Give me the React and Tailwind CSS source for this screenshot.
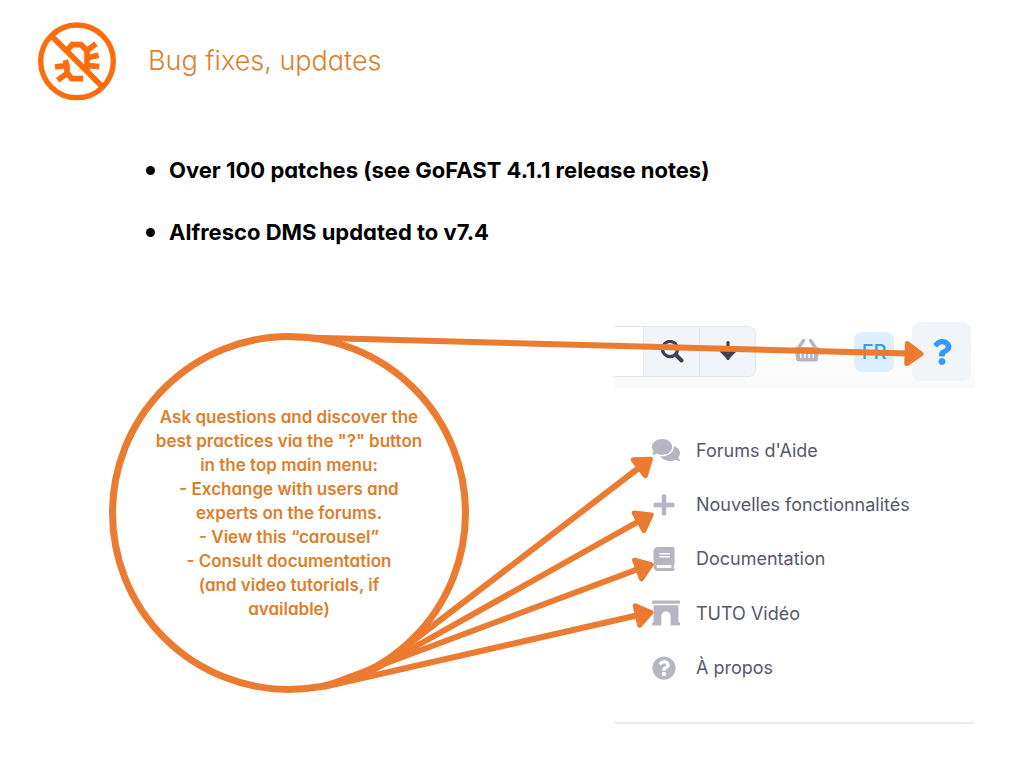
import {
  FaArchway,
  FaBook,
  FaComments,
  FaPlus,
  FaQuestion,
  FaQuestionCircle,
} from 'react-icons/fa';

const menu = [
  { label: "Forums d'Aide", Icon: FaComments, size: 'size-7' },
  { label: 'Nouvelles fonctionnalités', Icon: FaPlus, size: 'size-6' },
  { label: 'Documentation', Icon: FaBook, size: 'size-6' },
  { label: 'TUTO Vidéo', Icon: FaArchway, size: 'size-7' },
  { label: 'À propos', Icon: FaQuestionCircle, size: 'size-6' },
];

function NoBugIcon() {
  return (
    <svg viewBox="51 33 240 240" className="size-20 shrink-0" fill="none" stroke="#ff6c0c" strokeWidth="17" aria-hidden="true">
      <circle cx="171" cy="154" r="109" strokeWidth="16" />
      <path d="M94 77 248 231" />
      <path d="M140 124 156 104H183L201 122V180" />
      <path d="M198 124 228 101M201 143 236 136M201 166 238 170" />
      <path d="M136 150 141 167V187L155 206H190M105 171 142 166M113 211 143 189" />
    </svg>
  );
}

function SearchIcon() {
  return (
    <svg viewBox="0 0 24 24" className="size-6" fill="none" stroke="#3f4254" strokeWidth="3.2" aria-hidden="true">
      <circle cx="10" cy="9" r="7.600" />
      <path d="m16 15 5.500 5.500" strokeWidth="4" strokeLinecap="round" />
    </svg>
  );
}

function DownIcon() {
  return (
    <svg viewBox="0 0 24 24" className="size-6" fill="none" stroke="#3f4254" strokeWidth="3.2" strokeLinecap="round" aria-hidden="true">
      <path d="M12 2.500v16" />
      <path d="M5 11.500l7 7 7-7Z" fill="#3f4254" strokeWidth="2" strokeLinejoin="round" />
    </svg>
  );
}

function BasketIcon() {
  return (
    <svg viewBox="0 0 26 24" className="h-6 w-[26px]" aria-hidden="true">
      <path fill="none" stroke="#b5b5c3" strokeWidth="3.400" strokeLinecap="round" d="m4.500 10 5-7.500M21.500 10l-5-7.500" />
      <path
        fill="#b5b5c3"
        fillRule="evenodd"
        d="M2 9h22a1.5 1.5 0 0 1 1.300 2l-1.300 10a3 3 0 0 1-3 2.500h-16a3 3 0 0 1-3-2.500L.7 11A1.500 1.500 0 0 1 2 9ZM6 14v6h1.600v-6ZM10.200 14v6h1.600v-6ZM14.200 14v6h1.600v-6ZM18.400 14v6H20v-6Z"
      />
    </svg>
  );
}

function Arrows() {
  return (
    <svg
      viewBox="109 322 866 402"
      className="pointer-events-none absolute top-0 left-0 h-[402px] w-[866px]"
      fill="none"
      stroke="#eb7b30"
      strokeWidth="6"
      aria-hidden="true"
    >
      <defs>
        <marker id="head" viewBox="0 0 20 26" markerWidth="20" markerHeight="26" refX="19" refY="13" orient="auto" markerUnits="userSpaceOnUse">
          <path d="M3 3V23L17 13Z" fill="#eb7b30" stroke="#eb7b30" strokeWidth="5" strokeLinejoin="round" />
        </marker>
      </defs>
      <path d="M288 337 909 353.600" />
      <path d="M396 654 640 467" />
      <path d="M370 672 641 520" />
      <path d="M325 686 641 568" />
      <path d="M323 687 641 614.500" />
      <g stroke="none">
        <path markerEnd="url(#head)" d="M288 337 923 354" />
        <path markerEnd="url(#head)" d="M396 654 652 458" />
        <path markerEnd="url(#head)" d="M370 672 653 514" />
        <path markerEnd="url(#head)" d="M325 686 653 564" />
        <path markerEnd="url(#head)" d="M323 687 653 612" />
      </g>
    </svg>
  );
}

function TopBar() {
  return (
    <div className="flex h-[66px] items-start bg-linear-to-b from-white from-30% to-[#f9f9fa]">
      <div className="mt-1 flex h-[51px] w-[142px] overflow-hidden rounded-r-lg border border-l-0 border-[#e1e5f0]">
        <input aria-label="Rechercher" className="w-[29px] min-w-0 bg-white outline-none" />
        <button aria-label="Lancer la recherche" className="flex flex-1 items-center justify-center border-l border-[#e1e5f0] bg-[#f1f4f8]">
          <SearchIcon />
        </button>
        <button aria-label="Options de recherche" className="flex flex-1 items-center justify-center border-l border-[#e1e5f0] bg-[#f1f4f8]">
          <DownIcon />
        </button>
      </div>
      <button aria-label="Panier" className="mt-4 ml-[38px]">
        <BasketIcon />
      </button>
      <button className="mt-[10px] ml-[34px] flex h-10 w-10 items-center justify-center rounded-lg bg-[#ddeeff] text-xl font-medium text-[#3699ff]">
        FR
      </button>
      <button aria-label="Aide" className="ml-[18px] flex h-[59px] w-[59px] items-center justify-center rounded-lg bg-[#f1f4f8] text-[#3699ff]">
        <FaQuestion className="size-[26px]" />
      </button>
    </div>
  );
}

export default function App() {
  return (
    <main className="min-h-screen bg-white pt-[21px] font-['Inter',sans-serif] text-black">
      <header className="flex items-center gap-[31px] pl-[37px] text-[#dc7f2d] [font-feature-settings:'cv11']">
        <NoBugIcon />
        <h1 className="text-[27px] font-light">Bug fixes, updates</h1>
      </header>

      <ul className="mt-[54px] flex flex-col gap-8 pl-[146px] text-[22px] leading-[30px] font-bold [font-feature-settings:'cv11']">
        <li className="flex items-center gap-[14px]">
          <span className="size-[9px] rounded-full bg-black" />
          Over 100 patches (see GoFAST 4.1.1 release notes)
        </li>
        <li className="flex items-center gap-[14px]">
          <span className="size-[9px] rounded-full bg-black" />
          Alfresco DMS updated to v7.4
        </li>
      </ul>

      <section className="relative mt-[75px] ml-[109px] flex w-fit items-start gap-[145px]">
        <div className="mt-[11px] flex size-[360px] items-center justify-center rounded-full border-7 border-[#eb7b30] text-center text-[17px] leading-6 font-semibold text-[#dc7f2d] [font-feature-settings:'cv11']">
          <p>
            Ask questions and discover the
            <br />
            best practices via the "?" button
            <br />
            in the top main menu:
            <br />
            - Exchange with users and
            <br />
            experts on the forums.
            <br />
            - View this “carousel”
            <br />
            - Consult documentation
            <br />
            (and video tutorials, if
            <br />
            available)
          </p>
        </div>

        <div className="w-[361px]">
          <TopBar />
          <nav className="h-[336px] rounded-b border-b-2 border-[#e9ebf0] pt-[35px]">
            <ul className="grid h-[272px] grid-rows-5">
              {menu.map(({ label, Icon, size }) => (
                <li key={label} className="flex items-center">
                  <a href="#" className="flex items-center gap-4 pl-[38px] text-[18px] text-[#565869]">
                    <span className="flex w-7 justify-start text-[#b5b5c3]">
                      <Icon className={size} />
                    </span>
                    {label}
                  </a>
                </li>
              ))}
            </ul>
          </nav>
        </div>
        <Arrows />
      </section>
    </main>
  );
}
